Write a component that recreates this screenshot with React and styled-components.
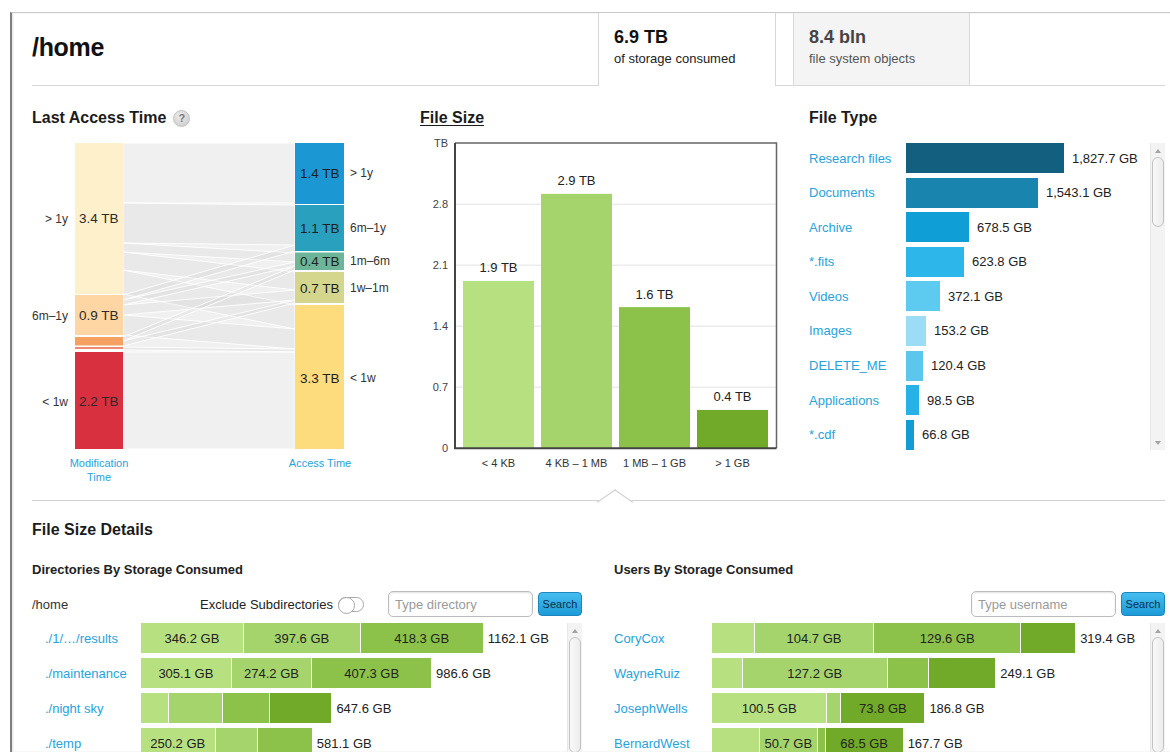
import React from "react"
import styled, { createGlobalStyle } from "styled-components"

const GlobalStyle = createGlobalStyle`
  html, body {
    margin: 0;
    padding: 0;
    background: #fff;
    overflow: hidden;
  }
  body {
    font-family: "Liberation Sans", Arial, sans-serif;
    color: #222;
  }
  * {
    box-sizing: border-box;
  }
`

const LINK = "#27a3dc"
const GREENS = ["#b7e181", "#a5d46c", "#8dc24a", "#71aa28"]

const Frame = styled.div`
  margin: 12px 0 0 10px;
  width: 1160px;
  height: 740px;
  overflow: hidden;
  border-top: 1px solid #c9c9c9;
  border-left: 2px solid #7f7f7f;
  box-shadow: inset 1px 0 2px rgba(0, 0, 0, 0.12);
  padding: 0 5px 0 20px;
`

const Header = styled.header`
  display: flex;
  height: 73px;
`

const TitleCell = styled.div`
  flex: 1;
  display: flex;
  align-items: center;
  padding-bottom: 4px;
  border-bottom: 1px solid #d8d8d8;
`

const Title = styled.h1`
  margin: 0;
  font-size: 25px;
  font-weight: bold;
  color: #111;
  letter-spacing: -0.3px;
`

const StatTab = styled.div`
  flex: 0 0 ${(p) => p.$width}px;
  padding: 13px 0 0 15px;
  border-left: 1px solid #d8d8d8;
  border-right: 1px solid #d8d8d8;
  border-bottom: ${(p) => (p.$active ? "none" : "1px solid #d8d8d8")};
  background: ${(p) => (p.$active ? "#fff" : "#f4f4f4")};
`

const StatValue = styled.div`
  font-size: 18px;
  line-height: 22px;
  font-weight: bold;
  color: ${(p) => (p.$muted ? "#444" : "#111")};
`

const StatLabel = styled.div`
  margin-top: 3px;
  font-size: 13px;
  line-height: 16px;
  color: ${(p) => (p.$muted ? "#555" : "#222")};
`

const HeaderFill = styled.div`
  flex: 0 0 ${(p) => p.$width}px;
  border-bottom: 1px solid #d8d8d8;
`

const ChartsRow = styled.section`
  display: grid;
  grid-template-columns: 388px 389px 356px;
  padding-top: 22px;
`

const Panel = styled.div`
  display: flex;
  flex-direction: column;
`

const PanelTitle = styled.h2`
  display: flex;
  align-items: center;
  gap: 7px;
  margin: 0 0 ${(p) => p.$gap || 12}px;
  font-size: 16px;
  line-height: 20px;
  font-weight: bold;
  color: #1b1b1b;
  text-decoration: ${(p) => (p.$underline ? "underline" : "none")};
  text-underline-offset: 2px;
`

const HelpBadge = styled.span`
  width: 17px;
  height: 17px;
  border-radius: 50%;
  background: radial-gradient(circle at 40% 35%, #ececec, #c9c9c9);
  border: 1px solid #c2c2c2;
  color: #7a7a7a;
  font-size: 11px;
  font-weight: bold;
  line-height: 15px;
  text-align: center;
`

const Chart = styled.svg`
  display: block;
  font-family: "Liberation Sans", Arial, sans-serif;
  overflow: visible;
`

const TypeWrap = styled.div`
  display: flex;
  height: 307px;
`

const TypeRows = styled.div`
  flex: 1;
  display: flex;
  flex-direction: column;
  gap: 4.6px;
`

const TypeRow = styled.div`
  display: grid;
  grid-template-columns: 97px 1fr;
  align-items: center;
  height: 30px;
`

const LinkLabel = styled.span`
  font-size: 13px;
  color: ${LINK};
  white-space: nowrap;
  padding-left: ${(p) => p.$indent || 0}px;
`

const TypeBarLine = styled.div`
  display: flex;
  align-items: center;
  gap: 8px;
  height: 100%;
`

const TypeBar = styled.div`
  height: 30px;
  background: ${(p) => p.$color};
`

const ValueText = styled.span`
  font-size: 13px;
  color: #222;
  white-space: nowrap;
`

const Track = styled.div`
  width: 15px;
  flex: 0 0 15px;
  display: flex;
  flex-direction: column;
  align-items: center;
  padding: 6px 0 5px;
  background: #f3f3f3;
  border-left: 1px solid #e8e8e8;
`

const Arrow = styled.span`
  width: 0;
  height: 0;
  border-left: 3px solid transparent;
  border-right: 3px solid transparent;
  ${(p) => (p.$down ? "border-top" : "border-bottom")}: 4px solid #a3a3a3;
`

const Thumb = styled.div`
  margin-top: 4px;
  width: 12px;
  height: ${(p) => p.$height}px;
  border: 1px solid #c3c3c3;
  border-radius: 6px;
  background: linear-gradient(90deg, #f9f9f9, #ececec);
`

const Spacer = styled.div`
  flex: 1;
`

const Divider = styled.div`
  position: relative;
  margin-top: 15px;
  border-top: 1px solid #d2d2d2;

  &::after {
    content: "";
    position: absolute;
    left: 574px;
    top: -8.5px;
    width: 17px;
    height: 17px;
    background: #fff;
    border-top: 1px solid #d2d2d2;
    border-left: 1px solid #d2d2d2;
    transform: scaleX(1.45) rotate(45deg);
  }
`

const SectionTitle = styled.h2`
  margin: 19px 0 0;
  font-size: 16px;
  line-height: 20px;
  font-weight: bold;
  color: #1b1b1b;
`

const DetailsGrid = styled.div`
  display: grid;
  grid-template-columns: 550px 551px;
  column-gap: 32px;
  margin-top: 22px;
`

const SubTitle = styled.h3`
  margin: 0;
  font-size: 13px;
  line-height: 16px;
  font-weight: bold;
  color: #222;
`

const Controls = styled.div`
  display: flex;
  align-items: center;
  justify-content: flex-end;
  height: 26px;
  margin-top: 13px;
  font-size: 13px;
`

const PathText = styled.span`
  flex: 1;
  color: #333;
`

const ToggleLabel = styled.label`
  display: flex;
  align-items: center;
  gap: 5px;
  margin-right: 24px;
  color: #222;
`

const Toggle = styled.span`
  position: relative;
  width: 26px;
  height: 15px;
  border: 1px solid #a9a9a9;
  border-radius: 8px;
  background: #fff;

  &::before {
    content: "";
    position: absolute;
    left: -1px;
    top: -1px;
    width: 15px;
    height: 15px;
    border-radius: 50%;
    border: 1px solid #a9a9a9;
    background: #fff;
  }
`

const SearchInput = styled.input`
  width: 145px;
  height: 26px;
  padding: 0 6px;
  border: 1px solid #bcbcbc;
  border-radius: 5px;
  box-shadow: inset 0 1px 2px rgba(0, 0, 0, 0.12);
  font-family: inherit;
  font-size: 13px;
  color: #333;
  outline: none;

  &::placeholder {
    color: #9a9a9a;
  }
`

const SearchButton = styled.button`
  margin-left: 5px;
  width: 44px;
  height: 24px;
  padding: 0;
  border: 1px solid #1a86bd;
  border-radius: 4px;
  background: linear-gradient(#45bdf0, #1c9bd7);
  font-family: inherit;
  font-size: 11px;
  color: #0d2f4b;
`

const UsageBox = styled.div`
  display: flex;
  height: 135px;
  margin-top: 6px;
  overflow: hidden;
`

const UsageRows = styled.div`
  flex: 1;
  display: flex;
  flex-direction: column;
  gap: 5px;
`

const UsageRow = styled.div`
  display: grid;
  grid-template-columns: ${(p) => p.$labelWidth}px 1fr;
  align-items: center;
  height: 30px;
`

const StackLine = styled.div`
  display: flex;
  align-items: center;
  gap: 5px;
  height: 100%;
`

const Stack = styled.div`
  display: flex;
  height: 30px;
`

const Segment = styled.div`
  display: flex;
  align-items: center;
  justify-content: center;
  overflow: hidden;
  white-space: nowrap;
  font-size: 13px;
  color: #222;
  background: ${(p) => p.$color};

  & + & {
    border-left: 1px solid #fff;
  }
`

const fileTypes = [
  { name: "Research files", size: "1,827.7 GB", w: 158, color: "#135f7f" },
  { name: "Documents", size: "1,543.1 GB", w: 132, color: "#1984ad" },
  { name: "Archive", size: "678.5 GB", w: 63, color: "#0f9ed5" },
  { name: "*.fits", size: "623.8 GB", w: 58, color: "#2cb6e9" },
  { name: "Videos", size: "372.1 GB", w: 34, color: "#5dcaf0" },
  { name: "Images", size: "153.2 GB", w: 20, color: "#9cdcf5" },
  { name: "DELETE_ME", size: "120.4 GB", w: 17, color: "#5dc6ed" },
  { name: "Applications", size: "98.5 GB", w: 13, color: "#27b1e6" },
  { name: "*.cdf", size: "66.8 GB", w: 8, color: "#109dd4" },
]

// each part: [GB, show label]
const directories = [
  { name: "./1/…/results", total: "1162.1 GB", parts: [[346.2, 1], [397.6, 1], [418.3, 1], [0]] },
  { name: "./maintenance", total: "986.6 GB", parts: [[305.1, 1], [274.2, 1], [407.3, 1], [0]] },
  { name: "./night sky", total: "647.6 GB", parts: [[92], [184], [160], [211.6]] },
  { name: "./temp", total: "581.1 GB", parts: [[250.2, 1], [143], [187.9], [0]] },
]

const users = [
  { name: "CoryCox", total: "319.4 GB", parts: [[36.9], [104.7, 1], [129.6, 1], [48.2]] },
  { name: "WayneRuiz", total: "249.1 GB", parts: [[26.4], [127.2, 1], [36], [59.5]] },
  { name: "JosephWells", total: "186.8 GB", parts: [[100.5, 1], [12.5], [0], [73.8, 1]] },
  { name: "BernardWest", total: "167.7 GB", parts: [[41.3], [50.7, 1], [7.2], [68.5, 1]] },
]

// sankey bands: left top, left bottom, right top, right bottom
const flows = [
  [143, 203, 143, 203],
  [203, 243, 205, 245],
  [243, 252, 253, 262],
  [252, 270, 272, 290],
  [270, 294, 305, 329],
  [295, 300, 245, 251],
  [300, 305, 262, 266],
  [305, 315, 290, 300],
  [315, 335, 329, 349],
  [337, 341, 266, 270],
  [341, 346, 300, 303],
  [347, 350, 349, 352],
  [352, 449, 352, 449],
]

const modified = [
  { y: 143, h: 151, color: "#fdf0cb", label: "> 1y", value: "3.4 TB", cy: 218 },
  { y: 295, h: 40, color: "#fdd6a3", label: "6m–1y", value: "0.9 TB", cy: 315 },
  { y: 337, h: 8.5, color: "#f6a161" },
  { y: 347, h: 2, color: "#ee8a72" },
  { y: 352, h: 97, color: "#d9303f", label: "< 1w", value: "2.2 TB", cy: 401 },
]

const accessed = [
  { y: 143, h: 61, color: "#1b97d4", label: "> 1y", value: "1.4 TB", cy: 173 },
  { y: 205, h: 46, color: "#29a0bd", label: "6m–1y", value: "1.1 TB", cy: 228 },
  { y: 252.5, h: 17.5, color: "#6cb598", label: "1m–6m", value: "0.4 TB", cy: 261 },
  { y: 272, h: 31, color: "#d3d68c", label: "1w–1m", value: "0.7 TB", cy: 288 },
  { y: 305, h: 144, color: "#fddc7e", label: "< 1w", value: "3.3 TB", cy: 378 },
]

function bandPath([l0, l1, r0, r1]) {
  const a = 123
  const b = 295
  return `M${a},${l0} L${b},${r0} L${b},${r1} L${a},${l1} Z`
}

function AccessSankey() {
  return (
    <Chart width="368" height="345" viewBox="32 140 368 345">
      <rect x="123" y="143" width="172" height="306" fill="#f0f0f0" />
      {flows.map((f, i) => (
        <path
          key={i}
          d={bandPath(f)}
          fill={f[0] === f[2] ? "none" : "rgba(120,120,120,0.05)"}
          stroke="#fff"
          strokeWidth="1"
          strokeOpacity="0.9"
        />
      ))}
      {modified.map((s, i) => (
        <g key={i}>
          <rect x="75" y={s.y} width="48" height={s.h} fill={s.color} />
          {s.value && (
            <>
              <text x="68" y={s.cy + 4.5} fontSize="12" fill="#333" textAnchor="end">
                {s.label}
              </text>
              <text x="79" y={s.cy + 4.5} fontSize="13.5" fill="#2a2a2a">
                {s.value}
              </text>
            </>
          )}
        </g>
      ))}
      {accessed.map((s, i) => (
        <g key={i}>
          <rect x="295" y={s.y} width="49" height={s.h} fill={s.color} />
          <text x="300" y={s.cy + 4.5} fontSize="13.5" fill="#1f1f1f">
            {s.value}
          </text>
          <text x="350" y={s.cy + 4} fontSize="12" fill="#333">
            {s.label}
          </text>
        </g>
      ))}
      <g fontSize="11" fill={LINK} textAnchor="middle">
        <text x="99" y="467">Modification</text>
        <text x="99" y="481">Time</text>
        <text x="320" y="467">Access Time</text>
      </g>
    </Chart>
  )
}

const sizeBars = [
  { label: "< 4 KB", value: 1.92, text: "1.9 TB" },
  { label: "4 KB – 1 MB", value: 2.92, text: "2.9 TB" },
  { label: "1 MB – 1 GB", value: 1.62, text: "1.6 TB" },
  { label: "> 1 GB", value: 0.44, text: "0.4 TB" },
]

function SizeChart() {
  const base = 448.3
  const perTb = 87.14
  const ticks = ["0", "0.7", "1.4", "2.1", "2.8"]
  return (
    <Chart width="370" height="345" viewBox="420 140 370 345">
      {ticks.map((t, i) => {
        const y = base - i * 61
        return (
          <g key={t}>
            {i > 0 && <line x1="456" x2="776" y1={y} y2={y} stroke="#ececec" strokeWidth="1.5" />}
            <text x="448" y={y + 4} fontSize="11" fill="#444" textAnchor="end">
              {t}
            </text>
          </g>
        )
      })}
      <text x="448" y="147" fontSize="11" fill="#444" textAnchor="end">
        TB
      </text>
      {sizeBars.map((b, i) => {
        const x = 463 + i * 78
        const top = base - b.value * perTb
        return (
          <g key={b.label}>
            <rect x={x} y={top} width="71" height={base - top} fill={GREENS[i]} />
            <text x={x + 35.5} y={top - 8.5} fontSize="13" fill="#222" textAnchor="middle">
              {b.text}
            </text>
            <text x={x + 35.5} y="466.5" fontSize="11" fill="#333" textAnchor="middle">
              {b.label}
            </text>
          </g>
        )
      })}
      <path d="M455,143 H776.5 V448.3" fill="none" stroke="#666" strokeWidth="1.5" />
      <path d="M455,143 V448.3 H776.5" fill="none" stroke="#444" strokeWidth="2" />
    </Chart>
  )
}

function Scrollbar({ thumb, down }) {
  return (
    <Track>
      <Arrow />
      <Thumb $height={thumb} />
      <Spacer />
      {down && <Arrow $down />}
    </Track>
  )
}

function FileTypes() {
  return (
    <TypeWrap>
      <TypeRows>
        {fileTypes.map((t) => (
          <TypeRow key={t.name}>
            <LinkLabel>{t.name}</LinkLabel>
            <TypeBarLine>
              <TypeBar $color={t.color} style={{ width: t.w }} />
              <ValueText>{t.size}</ValueText>
            </TypeBarLine>
          </TypeRow>
        ))}
      </TypeRows>
      <Scrollbar thumb={70} down />
    </TypeWrap>
  )
}

function UsageList({ rows, scale, labelWidth, indent }) {
  return (
    <UsageBox>
      <UsageRows>
        {rows.map((r) => (
          <UsageRow key={r.name} $labelWidth={labelWidth}>
            <LinkLabel $indent={indent}>{r.name}</LinkLabel>
            <StackLine>
              <Stack>
                {r.parts.map(([gb, show], i) =>
                  gb > 0 ? (
                    <Segment key={i} $color={GREENS[i]} style={{ width: gb * scale }}>
                      {show ? `${gb.toFixed(1)} GB` : ""}
                    </Segment>
                  ) : null
                )}
              </Stack>
              <ValueText>{r.total}</ValueText>
            </StackLine>
          </UsageRow>
        ))}
      </UsageRows>
      <Scrollbar thumb={120} />
    </UsageBox>
  )
}

export default function App() {
  return (
    <>
      <GlobalStyle />
      <Frame>
        <Header>
          <TitleCell>
            <Title>/home</Title>
          </TitleCell>
          <StatTab $active $width={178}>
            <StatValue>6.9 TB</StatValue>
            <StatLabel>of storage consumed</StatLabel>
          </StatTab>
          <HeaderFill $width={17} />
          <StatTab $width={177}>
            <StatValue $muted>8.4 bln</StatValue>
            <StatLabel $muted>file system objects</StatLabel>
          </StatTab>
          <HeaderFill $width={195} />
        </Header>

        <ChartsRow>
          <Panel>
            <PanelTitle>
              Last Access Time <HelpBadge>?</HelpBadge>
            </PanelTitle>
            <AccessSankey />
          </Panel>
          <Panel>
            <PanelTitle $underline>File Size</PanelTitle>
            <SizeChart />
          </Panel>
          <Panel>
            <PanelTitle $gap={15}>File Type</PanelTitle>
            <FileTypes />
          </Panel>
        </ChartsRow>

        <Divider />
        <SectionTitle>File Size Details</SectionTitle>

        <DetailsGrid>
          <Panel>
            <SubTitle>Directories By Storage Consumed</SubTitle>
            <Controls>
              <PathText>/home</PathText>
              <ToggleLabel>
                Exclude Subdirectories <Toggle />
              </ToggleLabel>
              <SearchInput placeholder="Type directory" />
              <SearchButton>Search</SearchButton>
            </Controls>
            <UsageList rows={directories} scale={0.294} labelWidth={109} indent={13} />
          </Panel>
          <Panel>
            <SubTitle>Users By Storage Consumed</SubTitle>
            <Controls>
              <SearchInput placeholder="Type username" />
              <SearchButton>Search</SearchButton>
            </Controls>
            <UsageList rows={users} scale={1.137} labelWidth={98} />
          </Panel>
        </DetailsGrid>
      </Frame>
    </>
  )
}
